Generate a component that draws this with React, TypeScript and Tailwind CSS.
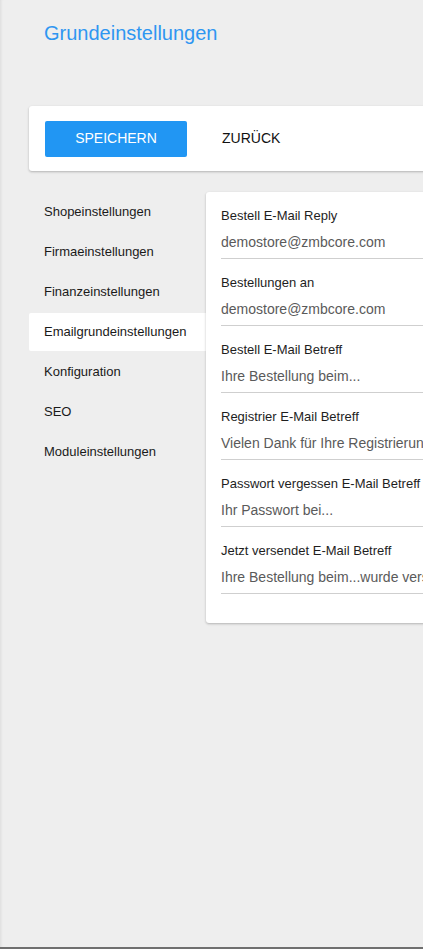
import React from "react";

const navItems = [
  "Shopeinstellungen",
  "Firmaeinstellungen",
  "Finanzeinstellungen",
  "Emailgrundeinstellungen",
  "Konfiguration",
  "SEO",
  "Moduleinstellungen",
];

const fields = [
  { label: "Bestell E-Mail Reply", value: "demostore@zmbcore.com" },
  { label: "Bestellungen an", value: "demostore@zmbcore.com" },
  { label: "Bestell E-Mail Betreff", value: "Ihre Bestellung beim..." },
  { label: "Registrier E-Mail Betreff", value: "Vielen Dank für Ihre Registrierung" },
  { label: "Passwort vergessen E-Mail Betreff", value: "Ihr Passwort bei..." },
  { label: "Jetzt versendet E-Mail Betreff", value: "Ihre Bestellung beim...wurde versendet" },
];

export default function App() {
  return (
    <div
      className="relative h-[949px] w-[423px] overflow-hidden border-b-2 border-[#6f6f6f] bg-[#eeeeee] shadow-[inset_3px_0_3px_-2px_rgba(0,0,0,0.08)]"
      style={{ fontFamily: '"Liberation Sans", Arial, sans-serif' }}
    >
      <div className="pl-[29px]">
        <h1 className="pl-[15px] pt-[21px] text-[20px] leading-[24px] text-[#2f96f1]">Grundeinstellungen</h1>

        <div className="mt-[61px] flex h-[65px] w-[420px] items-center rounded-l-[3px] bg-white pl-4 shadow-[0_1px_3px_rgba(0,0,0,0.14),0_1px_2px_rgba(0,0,0,0.12)]">
          <button className="h-9 w-[142px] rounded-[2px] bg-[#2196f3] text-[14px] font-medium uppercase text-white">
            Speichern
          </button>
          <button className="ml-[35px] text-[14px] uppercase text-[#111]">Zurück</button>
        </div>

        <div className="mt-[21px] flex items-start">
          <ul className="mt-px flex w-[177px] shrink-0 flex-col gap-[2px]">
            {navItems.map((item) => (
              <li
                key={item}
                className={`flex h-[38px] items-center rounded-l-[2px] pl-[15px] text-[13px] text-[#1a1a1a] ${
                  item === "Emailgrundeinstellungen" ? "bg-white" : ""
                }`}
              >
                {item}
              </li>
            ))}
          </ul>

          <div className="w-[320px] shrink-0 rounded-l-[3px] bg-white pb-[29px] pl-[15px] shadow-[0_1px_3px_rgba(0,0,0,0.14),0_1px_2px_rgba(0,0,0,0.12)]">
            {fields.map((field) => (
              <div key={field.label} className="border-b border-[#cfcfcf] pb-[6px] pt-4">
                <p className="text-[13px] leading-4 text-[#1e1e1e]">{field.label}</p>
                <p className="mt-2 whitespace-nowrap text-[14px] leading-5 text-[#5a5a5a]">{field.value}</p>
              </div>
            ))}
          </div>
        </div>
      </div>
    </div>
  );
}
